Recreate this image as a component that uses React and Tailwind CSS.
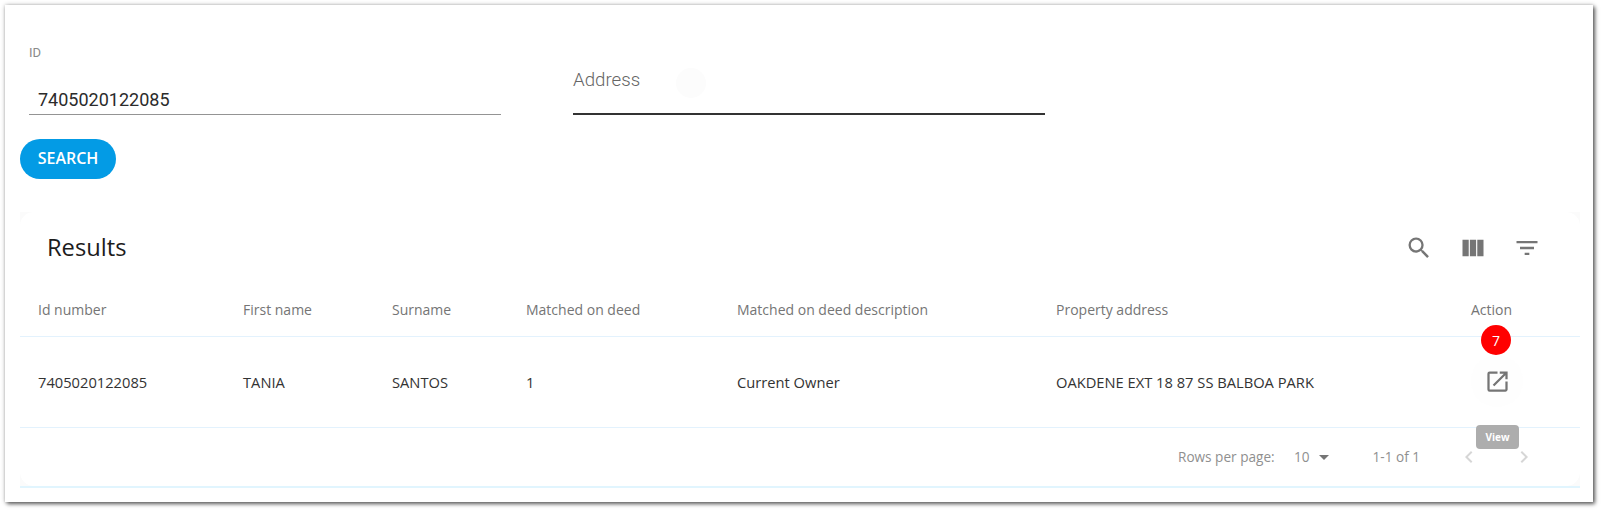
import React from 'react';
import { MdSearch, MdViewColumn, MdFilterList, MdOpenInNew, MdArrowDropDown, MdChevronLeft, MdChevronRight } from 'react-icons/md';

const columns = [
  { label: 'Id number', value: '7405020122085', width: 'w-[205px]' },
  { label: 'First name', value: 'TANIA', width: 'w-[149px]' },
  { label: 'Surname', value: 'SANTOS', width: 'w-[134px]' },
  { label: 'Matched on deed', value: '1', width: 'w-[211px]' },
  { label: 'Matched on deed description', value: 'Current Owner', width: 'w-[319px]' },
  { label: 'Property address', value: 'OAKDENE EXT 18 87 SS BALBOA PARK', width: 'w-[415px]' },
];

const App = () => {
  return (
    <div className="h-[511px] w-[1602px] overflow-hidden bg-white pl-[5px] pt-[5px] font-['Open_Sans',sans-serif]">
      <div className="h-[497px] w-[1588px] bg-white px-[15px] shadow-[2px_2px_4px_rgba(0,0,0,0.6),0_0_4px_rgba(0,0,0,0.25)]">
        <div className="flex h-[207px] flex-col">
          <div className="flex font-['Roboto',sans-serif]">
            <div className="ml-[9px] w-[472px]">
              <div className="mt-[40px] h-[15px] text-[13px] leading-[15px] text-[#8a8a8a]">ID</div>
              <div className="mt-[27px] h-[28px] border-b border-[#949494] pl-[9px] text-[18px] leading-[26px] text-[#2b2b2b]">
                7405020122085
              </div>
            </div>
            <div className="relative ml-[72px] w-[472px]">
              <div className="mt-[62px] h-[26px] text-[18.7px] font-light leading-[26px] text-[#666666]">Address</div>
              <div className="absolute left-[103px] top-[63px] h-[30px] w-[30px] rounded-full bg-[#fcfcfc]" />
              <div className="mt-[20px] border-b-2 border-[#333333]" />
            </div>
          </div>
          <button className="mt-[24px] h-[40px] w-[96px] rounded-[20px] bg-[#039be5] pb-[2px] text-[16px] font-semibold text-white">
            SEARCH
          </button>
        </div>

        <div className="h-[276px] w-[1560px] border-b-2 border-[#e1f5fe] bg-[#fbfbfb]">
          <div className="flex h-full flex-col rounded-[14px] bg-white">
            <div className="flex h-[75px] items-center justify-between pl-[27px] pb-[4px]">
              <h2 className="text-[23.7px] font-medium text-[#1c1c1c]">Results</h2>
              <div className="mr-[39px] flex items-center gap-[26px] text-[#757575]">
                <MdSearch size={28} />
                <MdViewColumn size={28} />
                <MdFilterList size={28} />
              </div>
            </div>

            <div className="flex h-[50px] items-center border-b border-[#e3f2fd] pl-[18px] pb-[5px] text-[14px] text-[#757575]">
              {columns.map((col) => (
                <div key={col.label} className={col.width}>{col.label}</div>
              ))}
              <div>Action</div>
            </div>

            <div className="relative flex h-[91px] items-center border-b border-[#e3f2fd] pl-[18px] pt-[1px] text-[14.7px] text-[#333333]">
              {columns.map((col) => (
                <div key={col.label} className={col.width}>{col.value}</div>
              ))}
              <div className="absolute left-[1451px] top-[18px] flex h-[52px] w-[52px] items-center justify-center rounded-full bg-[#fefefe] text-[#757575]">
                <MdOpenInNew size={27} />
              </div>
              <div className="absolute left-[1461px] top-[-12px] flex h-[30px] w-[30px] items-center justify-center rounded-full bg-[#ff0000] text-[14px] text-white">
                7
              </div>
            </div>

            <div className="relative flex flex-1 items-center pl-[1158px] text-[13.6px] text-[#8f8f8f]">
              <span className="w-[116px]">Rows per page:</span>
              <span>10</span>
              <MdArrowDropDown size={24} className="ml-[2px] text-[#757575]" />
              <span className="ml-[37px]">1-1 of 1</span>
              <MdChevronLeft size={24} className="ml-[37px] text-[#d6d6d6]" />
              <MdChevronRight size={24} className="ml-[31px] text-[#d6d6d6]" />
              <div className="absolute left-[1456px] top-[-3px] flex h-[24px] w-[43px] items-center justify-center rounded-[4px] bg-[#adadad] text-[10px] font-bold text-white">
                View
              </div>
            </div>
          </div>
        </div>
      </div>
    </div>
  );
};

export default App;
